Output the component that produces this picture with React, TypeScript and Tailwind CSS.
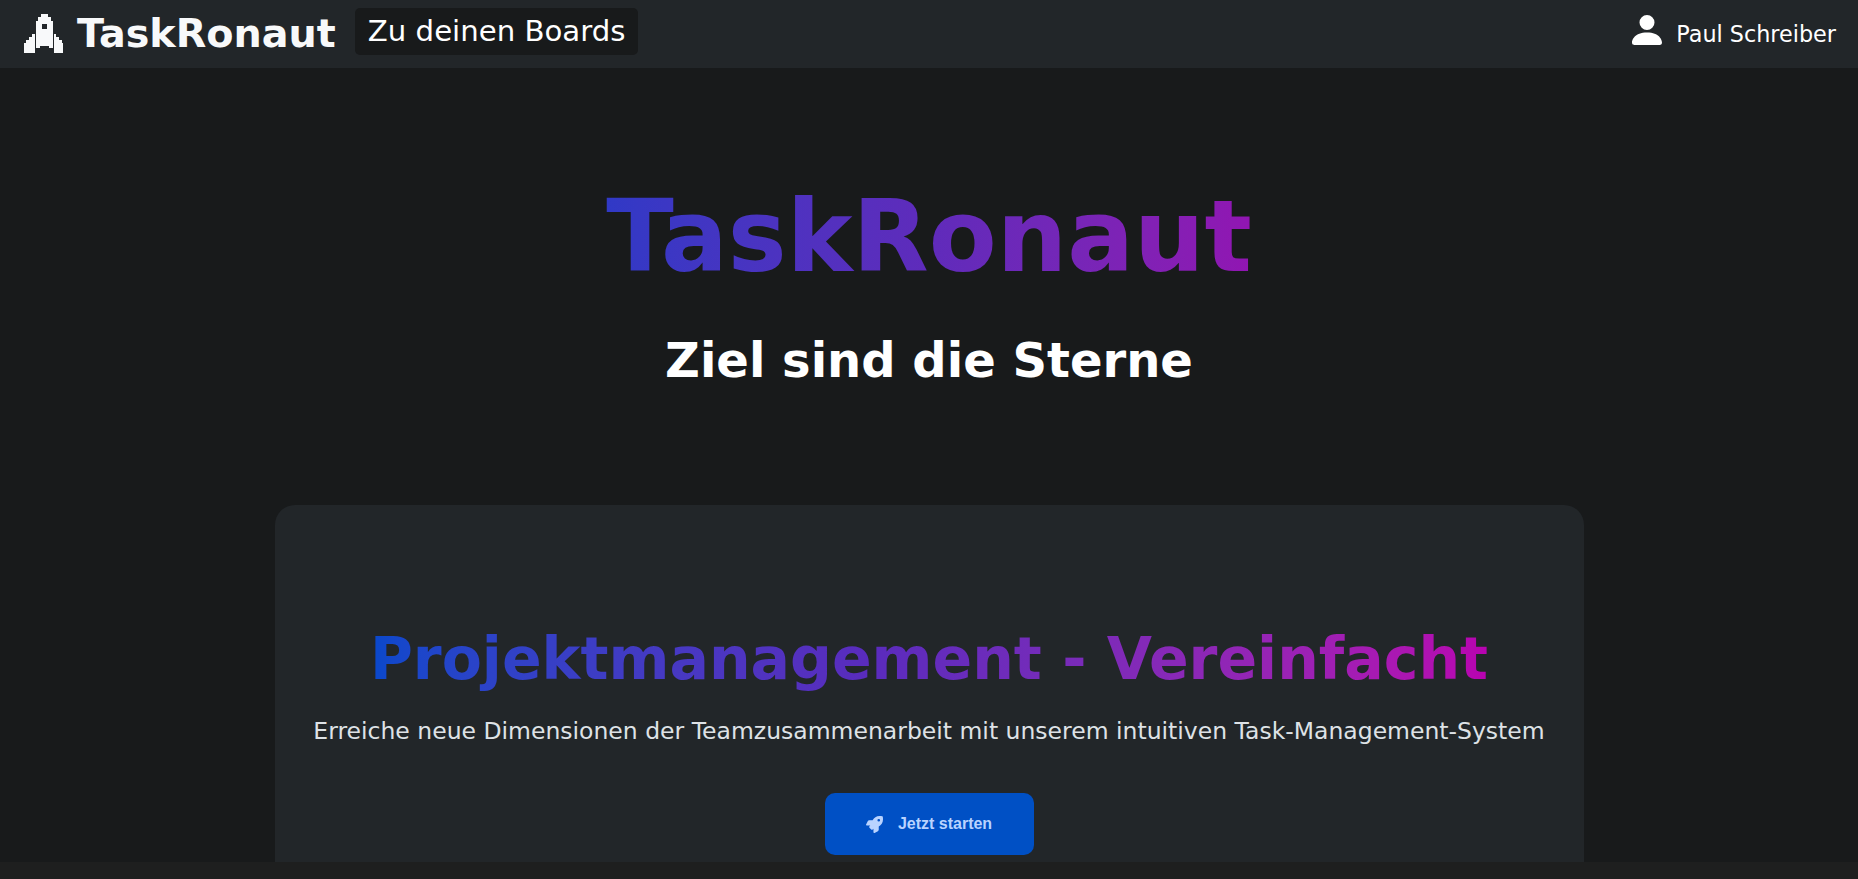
import React from 'react';
import { FaRocket } from 'react-icons/fa';

// pixel style logo from the navbar
const PixelRocket = () => (
    <svg width="40" height="40" viewBox="0 0 40 40" shapeRendering="crispEdges" className="shrink-0" fill="#f8f9fa">
        <path fillRule="evenodd" d="M17 0h7v3h3v4h2v27h-4v-2H16v2h-4V7h2V3h3zM18 10v5h5v-5z" />
        <path d="M8 20h3v19H0V29h2v-3h3v-3h3z" />
        <path d="M30 20h2v3h3v3h3v3h1v10h-9z" />
    </svg>
);

const Navbar = () => (
    <nav className="flex h-[68px] items-center justify-between bg-[#222629] pl-6 pr-[22px]">
        <div className="flex items-center">
            <PixelRocket />
            <a className="ml-[13px] text-[39.7px] font-bold leading-none text-[#f8f9fa]">TaskRonaut</a>
            <a className="-mt-[6px] ml-[19px] rounded-[5px] bg-[#181a1b] px-[13px] py-[6px] text-[29.2px] leading-[35px] text-white">Zu deinen Boards</a>
        </div>
        <div className="flex items-center gap-[9px] text-white">
            <svg width="40" height="40" viewBox="0 0 16 16" fill="#fff" className="-mt-2"><path d="M3 14s-1 0-1-1 1-4 6-4 6 3 6 4-1 1-1 1H3zm5-6a3 3 0 1 0 0-6 3 3 0 0 0 0 6z" /></svg>
            <span className="text-[22.3px] leading-none">Paul Schreiber</span>
        </div>
    </nav>
);

export default function App() {
    return (
        <div className="relative h-[879px] overflow-hidden bg-[#181a1b] font-['DejaVu_Sans','Verdana',sans-serif]">
            <Navbar />
            <header className="flex flex-col items-center pt-[113px]">
                <h1 className="bg-gradient-to-r from-[#3039c6] via-[#5f2bbb] to-[#9115b2] bg-clip-text text-[99px] font-bold leading-[112px] text-transparent">TaskRonaut</h1>
                <h2 className="mt-[38px] text-[48px] font-bold leading-[58px] text-white">Ziel sind die Sterne</h2>
            </header>
            <main className="mx-auto mt-[116px] flex w-[1309px] flex-col items-center rounded-[20px] bg-[#222629] pt-[118px] pb-10">
                <h3 className="bg-gradient-to-r from-[#0748cb] via-[#5a2bbd] via-45% to-[#b802b0] bg-clip-text text-[58.5px] font-bold leading-[72px] text-transparent">Projektmanagement - Vereinfacht</h3>
                <p className="mt-[18px] text-[23.5px] leading-[36px] text-[#dee2e6]">Erreiche neue Dimensionen der Teamzusammenarbeit mit unserem intuitiven Task-Management-System</p>
                <button className="mt-[44px] flex h-[62px] w-[209px] items-center justify-center gap-[15px] rounded-[10px] bg-[#0050c5] font-['Liberation_Sans',Arial,sans-serif] text-[16px] font-bold text-[#b9d3ff]">
                    <FaRocket size={17} />
                    Jetzt starten
                </button>
            </main>
            <div className="absolute inset-x-0 bottom-0 h-[17px] bg-[#1e1f1f]" />
        </div>
    );
}
